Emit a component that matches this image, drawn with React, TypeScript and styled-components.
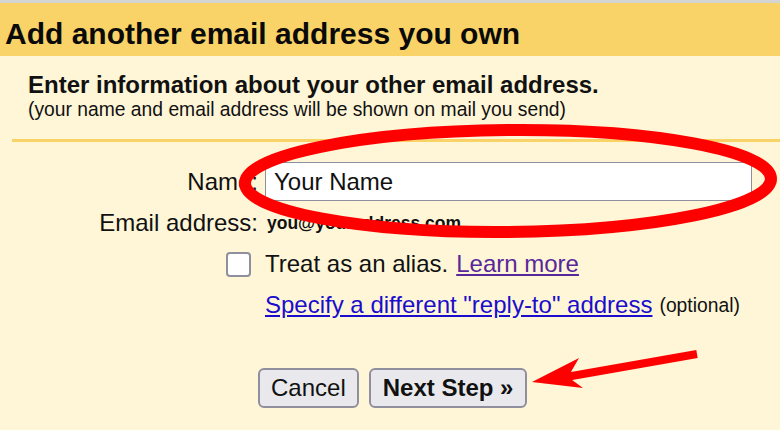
import styled, { createGlobalStyle } from "styled-components";

const GlobalStyle = createGlobalStyle`
  html, body {
    margin: 0;
    padding: 0;
    background: #fff6d8;
    font-family: "Liberation Sans", Arial, sans-serif;
    color: #111;
  }
`;

const Page = styled.div`
  position: relative;
  width: 780px;
  height: 430px;
  overflow: hidden;
  border-top: 3px solid #d4d4d4;
  box-sizing: border-box;
`;

const TitleBar = styled.h1`
  margin: 0;
  height: 53px;
  line-height: 61px;
  padding-left: 5px;
  background: #f9d367;
  font-size: 30px;
  font-weight: bold;
  color: #0a0a0a;
  white-space: nowrap;
`;

const Intro = styled.div`
  padding: 15px 0 0 28px;
`;

const IntroTitle = styled.div`
  font-size: 24px;
  font-weight: bold;
  line-height: 28px;
`;

const IntroNote = styled.div`
  font-size: 19.3px;
  line-height: 22px;
`;

const Divider = styled.div`
  margin: 18px 0 0 12px;
  height: 3px;
  background: #f9d367;
`;

const FormGrid = styled.div`
  display: grid;
  grid-template-columns: 258px 1fr;
  column-gap: 7px;
  align-items: center;
  padding-top: 20px;
  font-size: 24px;
`;

const Label = styled.div<{ $pt?: number }>`
  text-align: right;
  line-height: 26px;
  padding-top: ${({ $pt }) => $pt ?? 0}px;
  white-space: nowrap;
`;

const Field = styled.div<{ $pt?: number }>`
  display: flex;
  align-items: center;
  gap: 8px;
  padding-top: ${({ $pt }) => $pt ?? 0}px;
  min-height: 26px;
  line-height: 26px;
  grid-column: 2;
  white-space: nowrap;
`;

const TextInput = styled.input`
  width: 487px;
  height: 39px;
  box-sizing: border-box;
  border: 1px solid #8f8f9d;
  border-radius: 0;
  background: #fff;
  padding: 0 8px;
  font-family: "Liberation Sans", Arial, sans-serif;
  font-size: 24px;
  color: #111;
  outline: none;
`;

const EmailValue = styled.span`
  font-size: 17.5px;
  font-weight: bold;
  padding-left: 2px;
  margin-top: 1px;
`;

const Checkbox = styled.span`
  width: 21px;
  height: 21px;
  border: 2px solid #8f8f9d;
  border-radius: 4px;
  background: #fff;
  margin-left: -39px;
  margin-right: 6px;
`;

const Link = styled.a<{ $visited?: boolean }>`
  color: ${({ $visited }) => ($visited ? "#58289a" : "#1a0dcc")};
  text-decoration: underline;
  cursor: pointer;
`;

const Optional = styled.span`
  font-size: 19.3px;
  margin-left: -1px;
  padding-top: 3px;
`;

const Buttons = styled.div`
  display: flex;
  gap: 10px;
  padding: 49px 0 0 258px;
`;

const Button = styled.button<{ $primary?: boolean }>`
  height: 40px;
  padding: 0 ${({ $primary }) => ($primary ? 12 : 11)}px;
  font-family: "Liberation Sans", Arial, sans-serif;
  font-size: 24px;
  font-weight: ${({ $primary }) => ($primary ? "bold" : "normal")};
  color: #111;
  background: #e9e9ed;
  border: 2px solid #8f8f9d;
  border-radius: 6px;
  box-sizing: border-box;
`;

const Overlay = styled.svg`
  position: absolute;
  left: 0;
  top: -3px;
  pointer-events: none;
`;

const App = () => {
  return (
    <Page>
      <GlobalStyle />
      <TitleBar>Add another email address you own</TitleBar>
      <Intro>
        <IntroTitle>Enter information about your other email address.</IntroTitle>
        <IntroNote>(your name and email address will be shown on mail you send)</IntroNote>
      </Intro>
      <Divider />
      <FormGrid>
        <Label>Name:</Label>
        <Field>
          <TextInput defaultValue="Your Name" />
        </Field>
        <Label $pt={8}>Email address:</Label>
        <Field $pt={8}>
          <EmailValue>you@youraddress.com</EmailValue>
        </Field>
        <Field $pt={15}>
          <Checkbox />
          Treat as an alias. <Link $visited>Learn more</Link>
        </Field>
        <Field $pt={13}>
          <Link>Specify a different "reply-to" address</Link>
          <Optional>(optional)</Optional>
        </Field>
      </FormGrid>
      <Buttons>
        <Button>Cancel</Button>
        <Button $primary>Next Step »</Button>
      </Buttons>
      <Overlay width="780" height="430" viewBox="0 0 780 430">
        <ellipse
          cx="508"
          cy="181"
          rx="263"
          ry="51"
          fill="none"
          stroke="#ff0000"
          strokeWidth="12"
          transform="rotate(-0.5 508 181)"
        />
        <line x1="697" y1="354" x2="566" y2="377" stroke="#ff0000" strokeWidth="8" />
        <polygon points="532,382 579,358 568,377 583,388" fill="#ff0000" />
      </Overlay>
    </Page>
  );
};

export default App;
